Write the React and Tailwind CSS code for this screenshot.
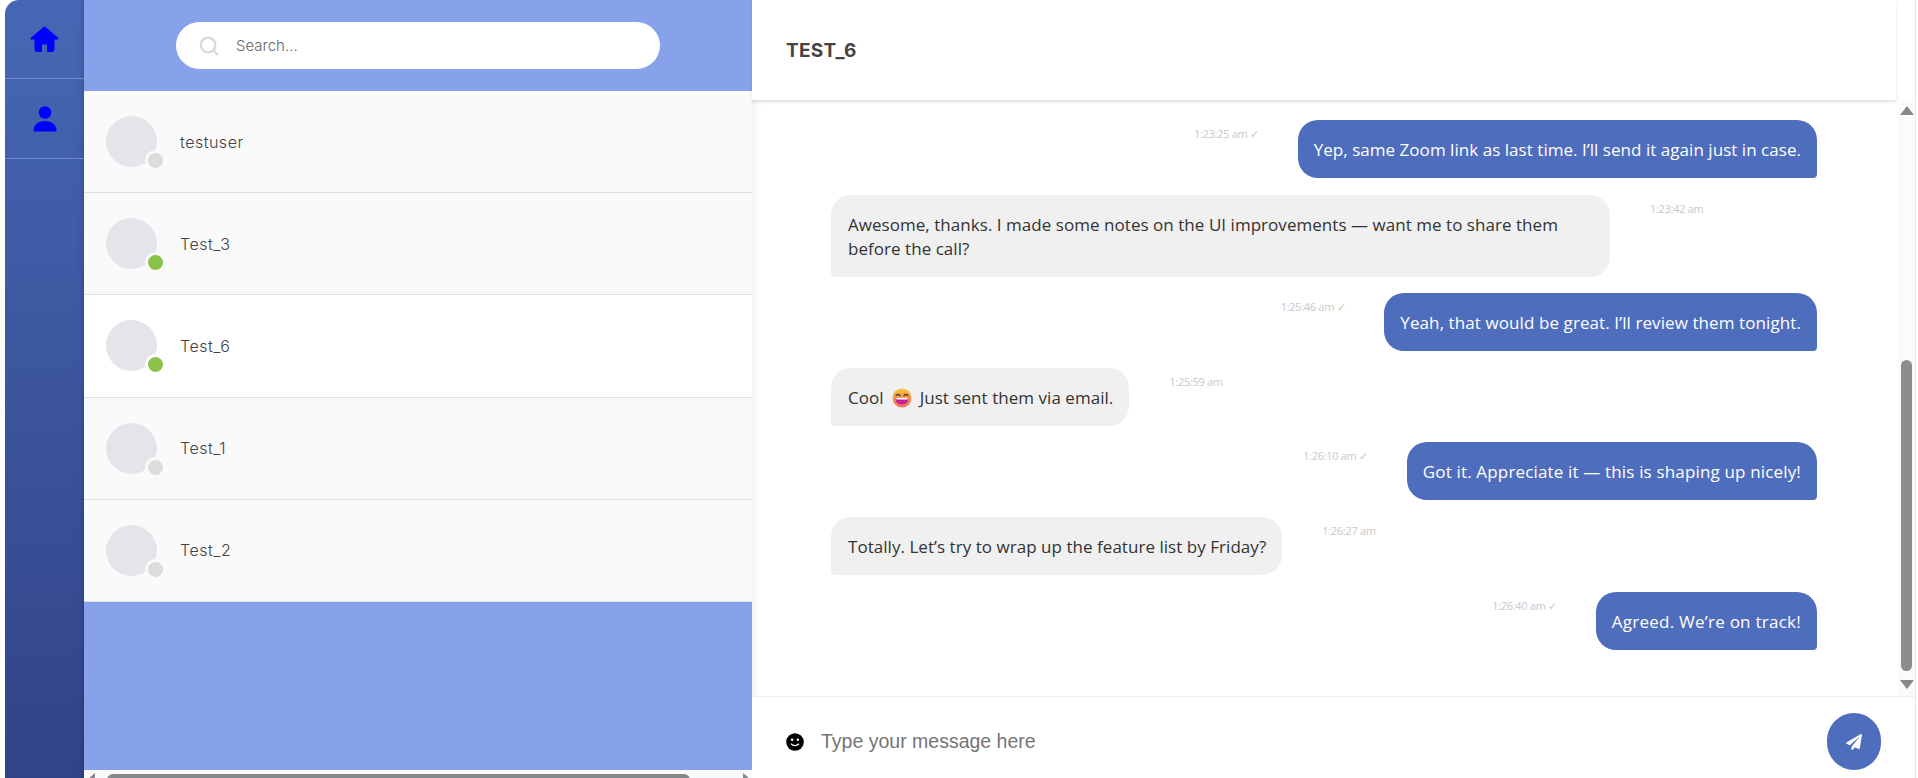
import { FaPaperPlane } from 'react-icons/fa';
import { Search } from 'lucide-react';

const users = [
  { name: 'testuser', online: false },
  { name: 'Test_3', online: true },
  { name: 'Test_6', online: true, active: true },
  { name: 'Test_1', online: false },
  { name: 'Test_2', online: false },
];

function GrinEmoji() {
  return (
    <svg viewBox="0 0 20 20" className="inline-block w-[20px] h-[20px] align-[-4px] mx-[8px]">
      <defs>
        <linearGradient id="face" x1="0" y1="0" x2="0" y2="1">
          <stop offset="0" stopColor="#f9c23c" />
          <stop offset="1" stopColor="#f0705a" />
        </linearGradient>
      </defs>
      <circle cx="10" cy="10" r="9.5" fill="url(#face)" />
      <path d="M4 7.5q2-2 4 0M12 7.5q2-2 4 0" stroke="#5b3a2e" strokeWidth="1.3" fill="none" strokeLinecap="round" />
      <path d="M3.5 10h13q0 6.5-6.5 6.5T3.5 10z" fill="#c81e9a" />
      <path d="M4 10h12l-.6 1.6H4.6z" fill="#fff" />
    </svg>
  );
}

function Sidebar() {
  return (
    <div className="w-[79px] ml-[5px] shrink-0 h-full rounded-tl-[14px] bg-gradient-to-b from-[#4668b4] to-[#324387] shadow-[inset_-6px_0_6px_-6px_rgba(20,30,80,0.35)] flex flex-col">
      <div className="h-[79px] border-b border-[#6c88cf] flex items-center justify-center">
        <svg viewBox="0 0 29 26" className="w-[29px] h-[26px]" fill="#0000ff">
          <path
            d="M14.5 1.5 27.5 12.5H23.5V23Q23.5 25 21.5 25H18V17.5H11V25H7.5Q5.5 25 5.5 23V12.5H1.5Z"
            stroke="#0000ff"
            strokeWidth="2"
            strokeLinejoin="round"
          />
        </svg>
      </div>
      <div className="h-[80px] border-b border-[#6c88cf] flex items-center justify-center">
        <svg viewBox="0 0 24 26" className="w-[24px] h-[26px]" fill="#0000ff">
          <circle cx="12" cy="6.5" r="6.3" />
          <path d="M.5 24.5C.5 19 5 15 12 15s11.5 4 11.5 9.5q0 1-1 1H1.5q-1 0-1-1z" />
        </svg>
      </div>
    </div>
  );
}

function UserRow({ user }) {
  return (
    <div className={`h-[102.2px] border-b border-[#e0e0e0] flex items-center pl-[22px] ${user.active ? 'bg-white' : 'bg-[#fafafa]'}`}>
      <div className="relative w-[51px] h-[51px] rounded-full bg-[#e4e5ea] mr-[23px]">
        <span
          className={`absolute left-[39px] top-[34px] w-[21px] h-[21px] rounded-full border-[3px] ${user.active ? 'border-white' : 'border-[#fafafa]'} ${user.online ? 'bg-[#8bc34a]' : 'bg-[#dcdcdc]'}`}
        />
      </div>
      <span className="font-['Inter',sans-serif] font-light text-[16px] tracking-[0.5px] text-[#444]">{user.name}</span>
    </div>
  );
}

function ContactPanel() {
  return (
    <div className="w-[668px] shrink-0 h-full flex flex-col bg-[#87a2ea] shadow-[4px_0_6px_rgba(0,0,0,0.06)] z-10">
      <div className="h-[91px] shrink-0 pt-[22px] pl-[92px]">
        <div className="w-[484px] h-[47px] rounded-full bg-white flex items-center pl-[22px]">
          <Search className="text-[#d8d8d8]" size={22} strokeWidth={2.4} />
          <span className="ml-[16px] mt-[2px] font-['Inter',sans-serif] font-light text-[15px] text-[#666]">Search...</span>
        </div>
      </div>
      {users.map((u) => (
        <UserRow key={u.name} user={u} />
      ))}
      <div className="flex-1" />
      <div className="h-[8px] shrink-0 bg-[#fafafa] flex items-start pt-[3px] pl-[4px] pr-[2px] overflow-hidden">
        <span className="w-0 h-0 border-y-[6px] border-y-transparent border-r-[7px] border-r-[#888]" />
        <span className="ml-[12px] w-[583px] h-[12px] mt-[1px] rounded-[6px] bg-[#888]" />
        <span className="ml-auto w-0 h-0 border-y-[6px] border-y-transparent border-l-[7px] border-l-[#888]" />
      </div>
    </div>
  );
}

const bubbleText = "font-['Open_Sans',sans-serif] text-[17px] leading-[24px] pt-[18px] pb-[16px]";
const stampText = "font-['Open_Sans',sans-serif] text-[11px] leading-[14px] tracking-[-0.3px] text-[#c8c8c8] mt-[7px]";

function Sent({ time, track = 'tracking-[0.04px]', children }) {
  return (
    <div className="flex justify-end items-start">
      <span className={`${stampText} mr-[39px]`}>{time} ✓</span>
      <div className={`${bubbleText} ${track} px-[16px] bg-[#4f6dbd] text-white rounded-[20px] rounded-br-[4px]`}>{children}</div>
    </div>
  );
}

function Received({ time, width, children }) {
  return (
    <div className="flex items-start">
      <div className={`${bubbleText} ${width} tracking-[0.04px] pl-[17px] pr-[16px] bg-[#f0f0f0] text-[#333] rounded-[20px] rounded-bl-[4px]`}>{children}</div>
      <span className={`${stampText} ml-[40px]`}>{time}</span>
    </div>
  );
}

function Messages() {
  return (
    <div className="flex-1 flex flex-col gap-[16.6px] pt-[20px] pl-[79px] pr-[81px]">
      <Sent time="1:23:25 am">Yep, same Zoom link as last time. I’ll send it again just in case.</Sent>
      <Received time="1:23:42 am" width="w-[779px]">
        Awesome, thanks. I made some notes on the UI improvements — want me to share them before the call?
      </Received>
      <Sent time="1:25:46 am" track="tracking-[0.09px]">Yeah, that would be great. I’ll review them tonight.</Sent>
      <Received time="1:25:59 am">
        Cool<GrinEmoji />Just sent them via email.
      </Received>
      <Sent time="1:26:10 am" track="tracking-[0.16px]">Got it. Appreciate it — this is shaping up nicely!</Sent>
      <Received time="1:26:27 am">Totally. Let’s try to wrap up the feature list by Friday?</Received>
      <Sent time="1:26:40 am" track="tracking-[0.25px]">Agreed. We’re on track!</Sent>
    </div>
  );
}

function ScrollBar() {
  return (
    <div className="w-[17px] shrink-0 bg-[#fbfbfb] flex flex-col items-center pt-[6px] pb-[7px]">
      <span className="w-0 h-0 border-x-[7px] border-x-transparent border-b-[9px] border-b-[#888]" />
      <span className="mt-auto w-[11px] h-[311px] rounded-[6px] bg-[#8c8c8c]" />
      <span className="mt-[9px] w-0 h-0 border-x-[7px] border-x-transparent border-t-[9px] border-t-[#888]" />
    </div>
  );
}

function Chat() {
  return (
    <div className="flex-1 min-w-0 h-full flex flex-col mr-[2px] border-r border-[#e8e8e8]">
      <div className="h-[100px] shrink-0 mr-[19px] flex items-center pt-[2px] pl-[34px] shadow-[0_2px_3px_rgba(0,0,0,0.12)] z-20 bg-white">
        <span className="font-['Inter',sans-serif] font-bold text-[19px] tracking-[0.3px] text-[#444]">TEST_6</span>
      </div>
      <div className="h-[596px] shrink-0 flex overflow-hidden">
        <Messages />
        <ScrollBar />
      </div>
      <div className="flex-1 bg-white z-20 border-t border-[#eee] flex items-center pt-[8px] pl-[34px] pr-[34px]">
        <svg viewBox="0 0 20 20" className="w-[18px] h-[18px] shrink-0">
          <circle cx="10" cy="10" r="9.8" fill="#000" />
          <circle cx="6.8" cy="7.5" r="1.4" fill="#fff" />
          <circle cx="13.2" cy="7.5" r="1.4" fill="#fff" />
          <path d="M5.5 12q4.5 4 9 0" stroke="#fff" strokeWidth="1.3" fill="none" />
        </svg>
        <span className="ml-[17px] font-['Liberation_Sans',sans-serif] text-[19.5px] text-[#757575]">Type your message here</span>
        <div className="ml-auto w-[54px] h-[57px] rounded-full bg-[#4f6dbd] flex items-center justify-center">
          <FaPaperPlane className="text-white text-[16px]" />
        </div>
      </div>
    </div>
  );
}

export default function App() {
  return (
    <div className="h-screen w-full flex overflow-hidden bg-white">
      <Sidebar />
      <ContactPanel />
      <Chat />
    </div>
  );
}
